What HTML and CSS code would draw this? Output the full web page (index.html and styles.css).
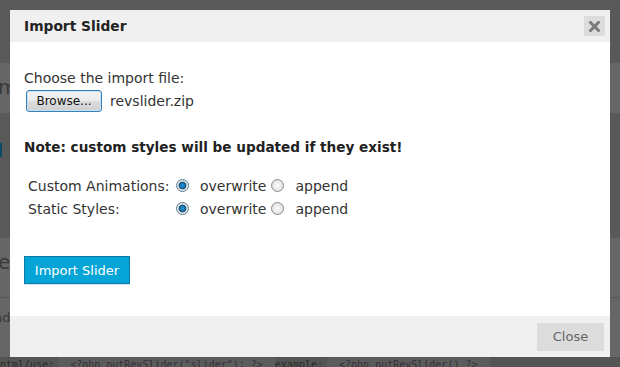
FILE: index.html
```html
<!DOCTYPE html>
<html lang="en">
<head>
    <meta charset="UTF-8">
    <title>Import Slider</title>
    <link rel="stylesheet" href="styles.css">
</head>
<body>
    <!-- dimmed page behind the modal -->
    <div class="page">
        <div class="band band-top"></div>
        <div class="band band-light"><span class="edge-text">m</span></div>
        <div class="band band-dark"><span class="edge-blue"></span></div>
        <div class="band band-row"><span class="edge-text">e</span></div>
        <div class="band band-row2"><span class="edge-text">nd</span></div>
        <div class="code-strip">
            <span class="code-label">ntml/use:</span>
            <span class="code-box">&lt;?php putRevSlider("slider"); ?&gt;</span>
            <span class="code-label">example:</span>
            <span class="code-box">&lt;?php putRevSlider() ?&gt;</span>
        </div>
    </div>

    <div class="dialog">
        <div class="dialog-title">
            <span>Import Slider</span>
            <button class="close-x" title="close">
                <svg width="11" height="11" viewBox="0 0 11 11">
                    <path d="M1.5 1.5 L9.5 9.5 M9.5 1.5 L1.5 9.5" stroke="#7a7a7a" stroke-width="3" stroke-linecap="square"/>
                </svg>
            </button>
        </div>

        <div class="dialog-body">
            <p class="choose">Choose the import file:</p>
            <div class="file-row">
                <button class="browse">Browse...</button>
                <span class="file-name">revslider.zip</span>
            </div>

            <p class="note">Note: custom styles will be updated if they exist!</p>

            <table class="options">
                <tr>
                    <td class="opt-label">Custom Animations:</td>
                    <td><input type="radio" name="anim" checked></td>
                    <td class="opt-text">overwrite</td>
                    <td><input type="radio" name="anim"></td>
                    <td class="opt-text">append</td>
                </tr>
                <tr>
                    <td class="opt-label">Static Styles:</td>
                    <td><input type="radio" name="static" checked></td>
                    <td class="opt-text">overwrite</td>
                    <td><input type="radio" name="static"></td>
                    <td class="opt-text">append</td>
                </tr>
            </table>

            <button class="import-btn">Import Slider</button>
        </div>

        <div class="dialog-footer">
            <button class="close-btn">Close</button>
        </div>
    </div>
</body>
</html>
```

FILE: styles.css
```css
/* Reset */
* {
    margin: 0;
    padding: 0;
    box-sizing: border-box;
}

body {
    width: 620px;
    height: 367px;
    overflow: hidden;
    background: #595959;
    font-family: 'DejaVu Sans', Verdana, sans-serif;
    font-size: 14px;
    color: #333;
}

/* Dimmed page behind */
.page {
    display: flex;
    flex-direction: column;
    height: 367px;
}

.band {
    position: relative;
    overflow: hidden;
}

.band-top { height: 63px; }

.band-light {
    height: 50px;
    background: #666;
}

.band-dark {
    height: 125px;
}

.band-row {
    height: 60px;
    background: #666;
    border-bottom: 1px solid #575757;
}

.band-row2 {
    height: 59px;
    background: #666;
}

.edge-text {
    display: block;
    padding: 12px 0 0 0;
    margin-left: -2px;
    font-size: 20px;
    color: #3a3a3a;
}

.band-row2 .edge-text {
    margin-left: -6px;
    font-size: 13px;
}

.edge-blue {
    display: block;
    width: 2px;
    height: 14px;
    margin-top: 30px;
    background: #0b4a66;
}

.code-strip {
    height: 10px;
    display: flex;
    background: #555;
    font-family: 'DejaVu Sans Mono', monospace;
    font-size: 10px;
    line-height: 16px;
    white-space: nowrap;
    overflow: hidden;
    color: #2b2b2b;
}

.code-label { padding: 0 4px 0 0; }

.code-box {
    background: #5c5c5c;
    padding: 0 12px;
    color: #3a2f3a;
}

/* Modal dialog */
.dialog {
    position: absolute;
    left: 10px;
    top: 10px;
    width: 600px;
    height: 347px;
    background: #fff;
    display: flex;
    flex-direction: column;
}

.dialog-title {
    height: 32px;
    background: #f0f0f0;
    display: flex;
    align-items: center;
    justify-content: space-between;
    padding: 0 5px 0 14px;
    font-weight: bold;
    font-size: 13.8px;
    color: #222;
}

.close-x {
    width: 21px;
    height: 20px;
    border: none;
    background: #dcdcdc;
    display: flex;
    align-items: center;
    justify-content: center;
}

.dialog-body {
    flex: 1;
    padding: 27px 14px 0 14px;
}

.choose {
    line-height: 18px;
}

.file-row {
    display: flex;
    align-items: center;
    gap: 8px;
    margin-top: 3px;
    padding-left: 2px;
}

.browse {
    width: 76px;
    height: 22px;
    border: 1px solid #3c7fb1;
    border-radius: 3px;
    background: linear-gradient(#f2f2f2, #ebebeb 50%, #dddddd 51%, #cfcfcf);
    box-shadow: inset 0 0 0 1px #bfe4f9;
    font-family: 'DejaVu Sans', Verdana, sans-serif;
    font-size: 12px;
    color: #111;
}

.note {
    margin-top: 26px;
    font-weight: bold;
    font-size: 13.6px;
    color: #222;
    line-height: 18px;
}

.options {
    margin-top: 18px;
    border-collapse: collapse;
    margin-left: 4px;
}

.options td {
    height: 23px;
    padding: 0;
    vertical-align: middle;
}

.opt-label { width: 148px; }

.opt-text { padding: 0 5px 0 11px !important; }

/* radio look of the old Windows theme */
input[type="radio"] {
    appearance: none;
    display: block;
    width: 13px;
    height: 13px;
    border-radius: 50%;
    border: 1px solid #8d8d8d;
    background: radial-gradient(circle, #fdfdfd 0%, #e2e2e2 70%, #cfcfcf 100%);
}

input[type="radio"]:checked {
    border-color: #5b7f99;
    background: radial-gradient(circle, #2e9fdd 0%, #0e6ba8 35%, #1b4a6b 45%, #e8e8e8 55%, #cfcfcf 100%);
}

.import-btn {
    margin-top: 36px;
    width: 106px;
    height: 28px;
    border: 1px solid #0d79a8;
    background: #04a4d6;
    color: #fff;
    font-family: 'DejaVu Sans', Verdana, sans-serif;
    font-size: 13px;
    box-shadow: 0 1px 0 #d9e8ef;
}

.dialog-footer {
    height: 41px;
    background: #f0f0f0;
    display: flex;
    align-items: center;
    justify-content: flex-end;
    padding-right: 6px;
}

.close-btn {
    width: 67px;
    height: 28px;
    border: none;
    background: #dcdcdc;
    color: #666;
    font-family: 'DejaVu Sans', Verdana, sans-serif;
    font-size: 13px;
}
```
